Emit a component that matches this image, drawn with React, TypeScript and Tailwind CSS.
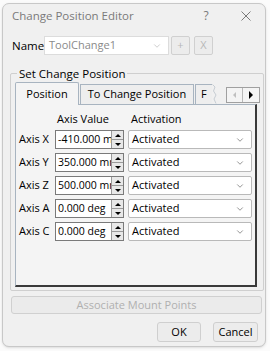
import { ChevronDown } from 'lucide-react'

const rows = [
  { label: 'Axis X', value: '-410.000 mm' },
  { label: 'Axis Y', value: '350.000 mm' },
  { label: 'Axis Z', value: '500.000 mm' },
  { label: 'Axis A', value: '0.000 deg' },
  { label: 'Axis C', value: '0.000 deg' },
]

function Spinner() {
  return (
    <div className="flex flex-col w-[12px] h-full border-l border-[#9a9a9a] bg-[#e8e8e8]">
      <div className="flex-1 flex items-center justify-center border-b border-[#9a9a9a]">
        <div className="w-0 h-0 border-l-[3px] border-r-[3px] border-b-[3px] border-l-transparent border-r-transparent border-b-black" />
      </div>
      <div className="flex-1 flex items-center justify-center">
        <div className="w-0 h-0 border-l-[3px] border-r-[3px] border-t-[3px] border-l-transparent border-r-transparent border-t-black" />
      </div>
    </div>
  )
}

export default function App() {
  return (
    <div className="w-[270px] h-[351px] bg-[#fbfbfb] pt-[3px] pl-[2px] text-[11px] text-[#1a1a1a]" style={{ fontFamily: '"Open Sans", "Noto Sans", sans-serif' }}>
      <div className="w-[264px] h-[344px] bg-[#f0f0f0] border border-[#c8c8c8] rounded-[7px] shadow-sm flex flex-col">
        {/* title bar */}
        <div className="h-[24px] flex items-center pl-[9px] pr-[14px] text-[#7a7a7a]">
          <span className="flex-1 text-[11.5px]">Change Position Editor</span>
          <span className="w-[12px] text-center mr-[29px] text-[12px]">?</span>
          <svg width="10" height="10" viewBox="0 0 10 10" className="stroke-[#7a7a7a]"><path d="M0.5 0.5 L9.5 9.5 M9.5 0.5 L0.5 9.5" strokeWidth="1" /></svg>
        </div>

        {/* name row */}
        <div className="flex items-center mt-[8px] pl-[9px] h-[19px]">
          <span className="w-[32px] text-[11.5px] text-black">Name</span>
          <div className="w-[125px] h-[19px] bg-white border border-[#dcdcdc] flex items-center pl-[4px] pr-[6px]">
            <span className="flex-1 text-[#8a8a8a]">ToolChange1</span>
            <ChevronDown size={10} className="text-[#b0b0b0]" strokeWidth={1.5} />
          </div>
          <div className="ml-[2px] w-[19px] h-[19px] border border-[#d0d0d0] rounded-[2px] bg-[#ececec] flex items-center justify-center text-[#b8b8b8] text-[11px]">+</div>
          <div className="ml-[4px] w-[19px] h-[19px] border border-[#d0d0d0] rounded-[2px] bg-[#ececec] flex items-center justify-center text-[#b8b8b8] text-[11px]">X</div>
        </div>

        {/* group box */}
        <div className="relative mt-[18px] ml-[7px] w-[254px] h-[218px] border border-[#cfcfcf] rounded-[2px] pl-[4px] pt-[7px]">
          <span className="absolute -top-[9px] left-[6px] bg-[#f0f0f0] px-[2px] text-[11.5px] text-black">Set Change Position</span>

          {/* tabs */}
          <div className="flex items-end h-[23px] relative">
            <div className="h-[23px] w-[64px] bg-[#f4f4f4] border border-[#a8b4c0] border-b-0 rounded-t-[2px] flex items-center justify-center text-black z-10 relative top-[1px]">Position</div>
            <div className="h-[20px] w-[114px] ml-[1px] bg-[#eeeeee] border border-[#a8b4c0] border-b-0 flex items-center justify-center text-black">To Change Position</div>
            <div className="h-[20px] w-[17px] ml-[1px] bg-[#eeeeee] border border-[#a8b4c0] border-b-0 border-r-0 flex items-center pl-[5px] text-black">F</div>
            <svg width="6" height="20" viewBox="0 0 6 20" className="self-end"><path d="M0.5 0.5 L3 3 L1.5 7 L4 11 L2 15 L4 19.5" fill="none" stroke="#c7cdd3" /></svg>
            <div className="ml-[8px] mb-[1px] flex h-[16px] border border-[#a0a0a0] bg-[#f4f4f4]">
              <div className="w-[16px] flex items-center justify-center border-r border-[#b8b8b8]">
                <div className="w-0 h-0 border-t-[3px] border-b-[3px] border-r-[3px] border-t-transparent border-b-transparent border-r-[#c0c0c0]" />
              </div>
              <div className="w-[16px] flex items-center justify-center">
                <div className="w-0 h-0 border-t-[4px] border-b-[4px] border-l-[4px] border-t-transparent border-b-transparent border-l-black" />
              </div>
            </div>
          </div>

          {/* tab panel */}
          <div className="w-[242px] h-[183px] bg-[#f4f4f4] border border-[#a8b4c0] border-r-[2px] border-r-[#3a3a3a] border-b-[2px] border-b-[#3a3a3a] pl-[3px] pt-[6px]">
            <div className="flex h-[17px] items-center text-black">
              <span className="ml-[38px] w-[74px]">Axis Value</span>
              <span>Activation</span>
            </div>
            <div className="flex flex-col gap-[4px] mt-[2px]">
              {rows.map((r) => (
                <div key={r.label} className="flex items-center h-[19px]">
                  <span className="w-[36px] text-black whitespace-nowrap">{r.label}</span>
                  <div className="w-[69px] h-[19px] bg-white border border-[#7a7a7a] flex items-stretch overflow-hidden">
                    <span className="flex-1 overflow-hidden whitespace-nowrap pl-[2px] leading-[17px] text-[10.5px] text-black">{r.value}</span>
                    <Spinner />
                  </div>
                  <div className="ml-[4px] w-[124px] h-[19px] bg-white border border-[#b9b9b9] rounded-[2px] flex items-center pl-[3px] pr-[6px]">
                    <span className="flex-1 text-black">Activated</span>
                    <ChevronDown size={10} className="text-[#555]" strokeWidth={1.5} />
                  </div>
                </div>
              ))}
            </div>
          </div>
        </div>

        {/* associate button */}
        <div className="mt-[5px] ml-[8px] w-[251px] h-[18px] border border-[#d0d0d0] rounded-[3px] bg-[#ebebeb] flex items-center justify-center text-[#b0b0b0]">Associate Mount Points</div>

        {/* ok cancel */}
        <div className="flex justify-end gap-[12px] mt-[8px] pr-[7px]">
          <div className="w-[44px] h-[20px] border border-[#cfcfcf] rounded-[3px] bg-[#ececec] flex items-center justify-center text-black">OK</div>
          <div className="w-[45px] h-[20px] border border-[#cfcfcf] rounded-[3px] bg-[#ececec] flex items-center justify-center text-black">Cancel</div>
        </div>
      </div>
    </div>
  )
}
